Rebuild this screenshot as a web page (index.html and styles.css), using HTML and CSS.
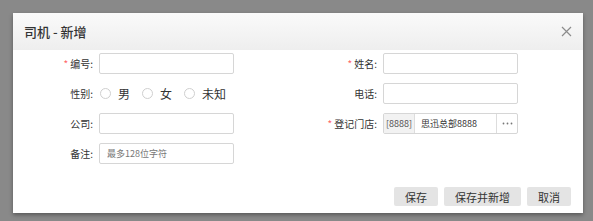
FILE: index.html
```html
<!DOCTYPE html>
<html>
<head>
    <title>司机 - 新增</title>
    <link rel="stylesheet" href="styles.css">
</head>
<body>
    <div class="dialog">
        <!-- Header -->
        <div class="dialog-header">
            <span class="dialog-title">司机 - 新增</span>
            <span class="dialog-close">
                <svg width="11" height="11" viewBox="0 0 11 11">
                    <path d="M1 1 L10 10 M10 1 L1 10" stroke="#8c8c8c" stroke-width="1.2" fill="none"/>
                </svg>
            </span>
        </div>

        <!-- Form -->
        <div class="dialog-body">
            <div class="form-grid">
                <div class="field">
                    <label class="field-label"><span class="req">*</span>编号:</label>
                    <input type="text" class="text-input">
                </div>
                <div class="field">
                    <label class="field-label"><span class="req">*</span>姓名:</label>
                    <input type="text" class="text-input">
                </div>

                <div class="field">
                    <label class="field-label">性别:</label>
                    <div class="radio-group">
                        <span class="radio"></span><span class="radio-text">男</span>
                        <span class="radio"></span><span class="radio-text">女</span>
                        <span class="radio"></span><span class="radio-text">未知</span>
                    </div>
                </div>
                <div class="field">
                    <label class="field-label">电话:</label>
                    <input type="text" class="text-input">
                </div>

                <div class="field">
                    <label class="field-label">公司:</label>
                    <input type="text" class="text-input">
                </div>
                <div class="field">
                    <label class="field-label"><span class="req">*</span>登记门店:</label>
                    <div class="picker">
                        <span class="picker-code">[8888]</span>
                        <span class="picker-name">思迅总部8888</span>
                        <span class="picker-btn">
                            <svg width="11" height="3" viewBox="0 0 11 3">
                                <circle cx="1.5" cy="1.5" r="0.9" fill="#777"/>
                                <circle cx="5.5" cy="1.5" r="0.9" fill="#777"/>
                                <circle cx="9.5" cy="1.5" r="0.9" fill="#777"/>
                            </svg>
                        </span>
                    </div>
                </div>

                <div class="field">
                    <label class="field-label">备注:</label>
                    <input type="text" class="text-input" placeholder="最多128位字符">
                </div>
            </div>
        </div>

        <!-- Footer -->
        <div class="dialog-footer">
            <button class="btn">保存</button>
            <button class="btn">保存并新增</button>
            <button class="btn">取消</button>
        </div>
    </div>
</body>
</html>
```

FILE: styles.css
```css
body {
    margin: 0;
    padding: 13px;
    background: #898989;
    font-family: "Noto Sans CJK SC", "Noto Sans", sans-serif;
    color: #333;
}

.dialog {
    width: 570px;
    height: 200px;
    background: #fff;
    display: flex;
    flex-direction: column;
    box-shadow: 0 2px 4px rgba(0, 0, 0, 0.35);
}

/* Header */
.dialog-header {
    height: 37px;
    display: flex;
    align-items: center;
    justify-content: space-between;
    padding: 0 11px 0 11px;
    background: linear-gradient(#fafafa, #eeeeee);
}

.dialog-title {
    font-size: 13px;
    font-weight: 500;
    color: #333;
}

.dialog-close {
    display: flex;
}

/* Form */
.dialog-body {
    padding-top: 3px;
}

.form-grid {
    display: grid;
    grid-template-columns: 284px 284px;
    grid-auto-rows: 21px;
    row-gap: 9px;
}

.field {
    display: flex;
    align-items: center;
}

.field-label {
    width: 86px;
    box-sizing: border-box;
    padding-right: 6px;
    text-align: right;
    font-size: 10px;
    color: #333;
}

.req {
    color: #f66;
    margin-right: 2px;
}

.text-input {
    width: 135px;
    height: 21px;
    box-sizing: border-box;
    border: 1px solid #d6d6d6;
    border-radius: 2px;
    padding: 0 7px;
    font-family: inherit;
    font-size: 9px;
    color: #333;
}

.text-input::placeholder {
    color: #777;
}

.radio-group {
    display: flex;
    align-items: center;
    font-size: 12px;
}

.radio {
    width: 11px;
    height: 11px;
    box-sizing: border-box;
    border: 1px solid #cfcfcf;
    border-radius: 50%;
    margin-left: 1px;
}

.radio-text {
    margin-left: 7px;
    margin-right: 11px;
}

.picker {
    width: 135px;
    height: 21px;
    box-sizing: border-box;
    border: 1px solid #d6d6d6;
    border-radius: 2px;
    display: flex;
    font-size: 9px;
}

.picker-code {
    width: 30px;
    background: #f2f2f2;
    border-right: 1px solid #ddd;
    display: flex;
    align-items: center;
    justify-content: center;
    color: #555;
}

.picker-name {
    flex: 1;
    display: flex;
    align-items: center;
    padding-left: 6px;
}

.picker-btn {
    width: 20px;
    border-left: 1px solid #ddd;
    display: flex;
    align-items: center;
    justify-content: center;
}

/* Footer */
.dialog-footer {
    margin-top: auto;
    display: flex;
    justify-content: flex-end;
    gap: 6px;
    padding: 0 12px 7px 0;
}

.btn {
    height: 19px;
    padding: 0 11px;
    border: none;
    border-radius: 2px;
    background: #e4e4e4;
    font-family: inherit;
    font-size: 11px;
    color: #333;
    cursor: pointer;
}
```
